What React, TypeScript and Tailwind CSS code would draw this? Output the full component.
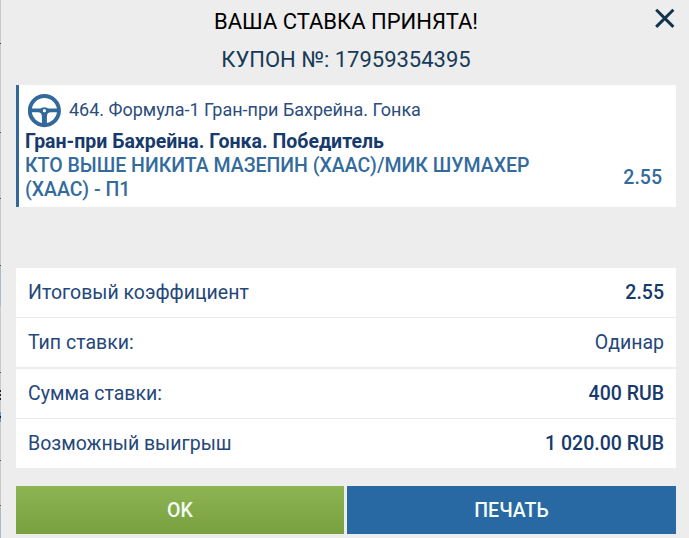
const edgeMarks = [
  { top: 43, height: 1, color: "#444444" },
  { top: 132, height: 1, color: "#555555" },
  { top: 198, height: 1, color: "#555555" },
  { top: 265, height: 1, color: "#444444" },
  { top: 267, height: 39, color: "#a9bac4" },
  { top: 372, height: 1, color: "#555555" },
  { top: 390, height: 2, color: "#222222" },
  { top: 394, height: 2, color: "#222222" },
  { top: 398, height: 2, color: "#222222" },
  { top: 412, height: 10, color: "#6d95bd" },
  { top: 416, height: 2, color: "#222222" },
  { top: 460, height: 1, color: "#555555" },
  { top: 505, height: 1, color: "#555555" },
  { top: 507, height: 31, color: "#a9bac4" },
];

const summary = [
  [
    { label: "Итоговый коэффициент", value: "2.55", strong: true },
    { label: "Тип ставки:", value: "Одинар", strong: false },
  ],
  [
    { label: "Сумма ставки:", value: "400 RUB", strong: true },
    { label: "Возможный выигрыш", value: "1 020.00 RUB", strong: true },
  ],
];

function SteeringWheel() {
  return (
    <svg viewBox="0 0 34 34" className="h-[34px] w-[34px] shrink-0" fill="none">
      <circle cx="16.4" cy="16.6" r="14.6" stroke="#33699a" strokeWidth="3.9" />
      <path
        d="M2.5 14.6h8.4c2.2 0 3.2-1.4 5.5-1.4s3.3 1.4 5.5 1.4h8.4v3.6h-7.1c-3 0-4.3 1.6-4.3 4.2v8.6h-5v-8.6c0-2.6-1.3-4.2-4.3-4.2H2.5z"
        fill="#33699a"
      />
      <circle cx="16.4" cy="16.7" r="1.6" fill="white" />
    </svg>
  );
}

export default function App() {
  return (
    <div className="relative h-[538px] w-[689px] overflow-hidden bg-[#ededed] pr-[13px] pl-4 font-[Roboto,sans-serif] text-[#173a6c]">
      {/* sliver of the page behind the dialog */}
      <div className="absolute inset-y-0 left-0 w-px bg-[#c9c9c9]">
        {edgeMarks.map((m) => (
          <span
            key={m.top}
            className="absolute left-0 w-px"
            style={{ top: m.top, height: m.height, backgroundColor: m.color }}
          />
        ))}
      </div>

      <button type="button" aria-label="Закрыть" className="absolute top-[8px] right-[14px]">
        <svg viewBox="0 0 20 20" className="h-5 w-5" stroke="#12344d" strokeWidth="3">
          <path d="M1.2 1.7 18.4 18.9M18.4 1.7 1.2 18.9" />
        </svg>
      </button>

      <header className="flex h-[85px] flex-col items-center pt-[3px] text-[22px] leading-[38px]">
        <h1 className="text-black">ВАША СТАВКА ПРИНЯТА!</h1>
        <p className="text-[#173a56]">КУПОН №: 17959354395</p>
      </header>

      <section className="flex h-[122px] border-l-3 border-[#33699a] bg-white pr-[14px] pl-[6px] text-[19.5px] leading-6">
        <div className="flex-1">
          <div className="flex h-[45px] items-center gap-[7px] pl-[3px] pt-[7px]">
            <SteeringWheel />
            <span className="-mt-0.5 text-[18px] text-[#2b4c7c]">464. Формула-1 Гран-при Бахрейна. Гонка</span>
          </div>
          <p className="font-bold">Гран-при Бахрейна. Гонка. Победитель</p>
          <p className="w-[530px] font-medium text-[#336b9d]">
            КТО ВЫШЕ НИКИТА МАЗЕПИН (ХААС)/МИК ШУМАХЕР (ХААС) - П1
          </p>
        </div>
        <span className="mt-[81px] font-medium text-[#336b9d]">2.55</span>
      </section>

      <section className="mt-[61px] flex flex-col gap-[2px] text-[19.5px]">
        {summary.map((group) => (
          <dl key={group[0].label} className="divide-y divide-[#e9e9e9] bg-white">
            {group.map((row) => (
              <div key={row.label} className="box-content flex h-[49px] items-center justify-between px-3">
                <dt className="text-[#25477a]">{row.label}</dt>
                <dd className={row.strong ? "font-medium" : "text-[#25477a]"}>{row.value}</dd>
              </div>
            ))}
          </dl>
        ))}
      </section>

      <div className="mt-[18px] flex h-12 gap-[3px] text-[19.5px] font-medium text-[#f4fbf4]">
        <button type="button" className="w-[328px] bg-linear-to-b from-[#8eb553] to-[#78a03f] pt-px">
          OK
        </button>
        <button type="button" className="flex-1 bg-[#2869a3] pt-px">
          ПЕЧАТЬ
        </button>
      </div>
    </div>
  );
}
